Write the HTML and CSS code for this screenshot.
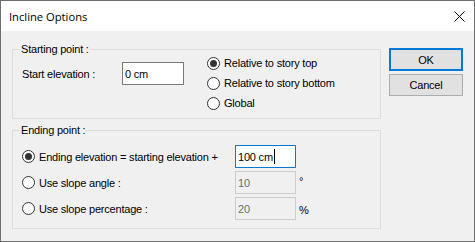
FILE: index.html
```html
<!DOCTYPE html>
<html lang="en">
<head>
  <meta charset="UTF-8">
  <title>Incline Options</title>
  <link rel="stylesheet" href="styles.css">
</head>
<body>

  <div class="window">

    <!-- Title bar -->
    <div class="titlebar">
      <span class="title">Incline Options</span>
      <svg class="close" width="11" height="11" viewBox="0 0 11 11">
        <path d="M0.5 0.5 L10.5 10.5 M10.5 0.5 L0.5 10.5" stroke="#000" stroke-width="1" fill="none"/>
      </svg>
    </div>

    <div class="content">
      <div class="groups">

        <!-- Starting point -->
        <div class="group group-start">
          <span class="legend">Starting point :</span>
          <div class="field">
            <label class="field-label" for="startElev">Start elevation :</label>
            <div class="textbox" id="startElev">0 cm</div>
          </div>
          <div class="radio-list">
            <div class="radio-row"><span class="radio checked"></span>Relative to story top</div>
            <div class="radio-row"><span class="radio"></span>Relative to story bottom</div>
            <div class="radio-row"><span class="radio"></span>Global</div>
          </div>
        </div>

        <!-- Ending point -->
        <div class="group group-end">
          <span class="legend">Ending point :</span>
          <div class="end-row">
            <div class="end-option"><span class="radio checked"></span>Ending elevation = starting elevation +</div>
            <div class="textbox focused">100 cm<span class="caret"></span></div>
          </div>
          <div class="end-row">
            <div class="end-option"><span class="radio"></span>Use slope angle :</div>
            <div class="textbox disabled">10</div>
            <span class="unit unit-deg">°</span>
          </div>
          <div class="end-row">
            <div class="end-option"><span class="radio"></span>Use slope percentage :</div>
            <div class="textbox disabled">20</div>
            <span class="unit">%</span>
          </div>
        </div>

      </div>

      <div class="buttons">
        <button class="btn btn-default" type="button">OK</button>
        <button class="btn" type="button">Cancel</button>
      </div>
    </div>

  </div>

</body>
</html>
```

FILE: styles.css
```css
* {
  box-sizing: border-box;
}

body {
  margin: 0;
  font-family: "Liberation Sans", Arial, sans-serif;
  font-size: 11px;
  letter-spacing: -0.2px;
  color: #000;
  background: #f0f0f0;
}

.window {
  width: 475px;
  height: 242px;
  border: 1px solid #6f6f6f;
  background: #f0f0f0;
}

.titlebar {
  height: 30px;
  background: #fff;
  display: flex;
  align-items: center;
  padding-left: 8px;
  padding-right: 9px;
}

.title {
  flex: 1;
  font-family: "Open Sans", "Noto Sans", sans-serif;
  font-size: 11.2px;
  letter-spacing: 0;
}

.close {
  display: block;
}

.content {
  display: flex;
  gap: 8px;
  padding-left: 11px;
}

.groups {
  width: 369px;
}

/* group boxes */
.group {
  position: relative;
  border: 1px solid #dcdcdc;
}

.legend {
  position: absolute;
  top: -8px;
  left: 7px;
  padding: 0 1px;
  line-height: 14px;
  background: #f0f0f0;
}

.group-start {
  margin-top: 18px;
  height: 70px;
  display: flex;
  align-items: flex-start;
  padding: 3px 0 0 9px;
}

.field {
  display: flex;
  align-items: center;
  margin-top: 9px;
}

.field-label {
  width: 100px;
}

.radio-list {
  margin-left: 23px;
}

.radio-row {
  height: 20px;
  display: flex;
  align-items: center;
}

.radio {
  width: 13px;
  height: 13px;
  border: 1px solid #333;
  border-radius: 50%;
  background: #fff;
  margin-right: 4px;
  display: flex;
  align-items: center;
  justify-content: center;
  flex-shrink: 0;
}

.radio.checked::after {
  content: "";
  width: 7px;
  height: 7px;
  border-radius: 50%;
  background: #333;
}

.group-end {
  margin-top: 11px;
  height: 99px;
  padding: 14px 0 0 9px;
  display: flex;
  flex-direction: column;
  gap: 3px;
}

.end-row {
  display: flex;
  align-items: center;
}

.end-option {
  width: 213px;
  display: flex;
  align-items: center;
}

/* text boxes */
.textbox {
  width: 62px;
  height: 23px;
  border: 1px solid #7a7a7a;
  background: #fff;
  padding-left: 2px;
  display: flex;
  align-items: center;
}

.end-row .textbox {
  width: 61px;
}

.textbox.focused {
  border-color: #0078d7;
}

.textbox.disabled {
  border-color: #cccccc;
  background: #f0f0f0;
  color: #6d6d6d;
}

.caret {
  width: 1px;
  height: 15px;
  background: #000;
  margin-left: 1px;
}

.unit {
  margin-left: 3px;
  margin-top: 3px;
}

.unit-deg {
  margin-top: -3px;
}

/* buttons */
.buttons {
  display: flex;
  flex-direction: column;
  gap: 3px;
  padding-top: 17px;
}

.btn {
  width: 74px;
  height: 22px;
  font-family: "Liberation Sans", Arial, sans-serif;
  font-size: 11px;
  letter-spacing: -0.2px;
  color: #000;
  background: #e1e1e1;
  border: 1px solid #adadad;
  padding: 0;
}

.btn-default {
  height: 23px;
  border: 2px solid #0078d7;
}
```
